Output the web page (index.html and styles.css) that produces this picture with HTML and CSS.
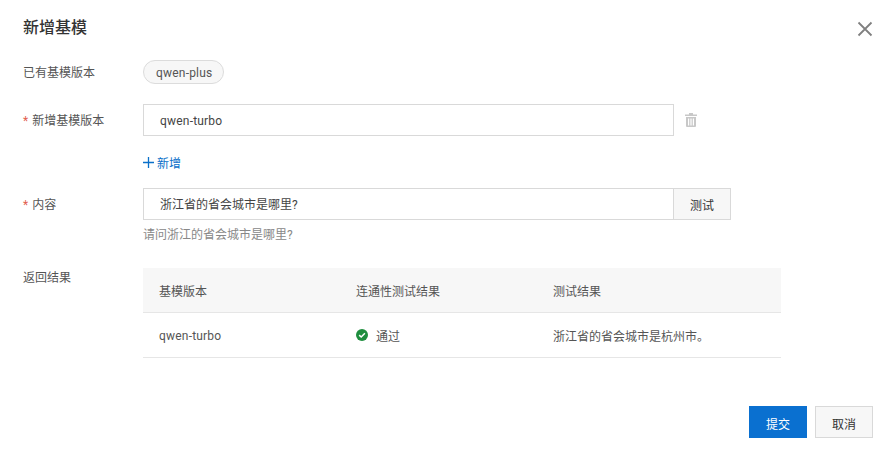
FILE: index.html
```html
<!DOCTYPE html>
<html lang="zh-CN">
<head>
    <meta charset="UTF-8">
    <title>新增基模</title>
    <link rel="stylesheet" href="styles.css">
</head>
<body>
    <div class="dialog">
        <div class="dialog-header">
            <h1 class="dialog-title">新增基模</h1>
            <svg class="close-icon" width="16" height="16" viewBox="0 0 16 16">
                <path d="M1.5 1.5 14.5 14.5M14.5 1.5 1.5 14.5" stroke="#808080" stroke-width="1.8" fill="none"/>
            </svg>
        </div>

        <div class="form">
            <div class="form-row row-existing">
                <div class="form-label">已有基模版本</div>
                <div class="form-field">
                    <span class="tag latin">qwen-plus</span>
                </div>
            </div>

            <div class="form-row row-new">
                <div class="form-label"><span class="required">*</span>新增基模版本</div>
                <div class="form-field">
                    <div class="input-line">
                        <div class="input latin">qwen-turbo</div>
                        <svg class="trash-icon" width="12" height="14" viewBox="0 0 12 14">
                            <path d="M4 0h4v1.5h4v1.5H0V1.500h4zM1 4h10v9a1 1 0 0 1-1 1H2a1 1 0 0 1-1-1zM3 5.500v7h1.200v-7zM5.400 5.500v7h1.200v-7zM7.800 5.500v7H9v-7z" fill="#c8c8c8" fill-rule="evenodd"/>
                        </svg>
                    </div>
                    <div class="add-link">
                        <svg width="11" height="11" viewBox="0 0 11 11">
                            <path d="M5.500 0v11M0 5.500h11" stroke="#0a70c9" stroke-width="1.300" fill="none"/>
                        </svg>
                        <span>新增</span>
                    </div>
                </div>
            </div>

            <div class="form-row row-content">
                <div class="form-label"><span class="required">*</span>内容</div>
                <div class="form-field">
                    <div class="input-line">
                        <div class="input">浙江省的省会城市是哪里?</div>
                        <div class="input-addon">测试</div>
                    </div>
                    <div class="hint">请问浙江的省会城市是哪里?</div>
                </div>
            </div>

            <div class="form-row">
                <div class="form-label label-result">返回结果</div>
                <div class="form-field">
                    <div class="result-table">
                        <div class="table-row table-head">
                            <div class="col-version">基模版本</div>
                            <div class="col-status">连通性测试结果</div>
                            <div>测试结果</div>
                        </div>
                        <div class="table-row table-body">
                            <div class="col-version latin">qwen-turbo</div>
                            <div class="col-status status-ok">
                                <svg width="12" height="12" viewBox="0 0 12 12">
                                    <circle cx="6" cy="6" r="6" fill="#1e8e3e"/>
                                    <path d="M3.200 6.100 5.200 8 8.900 4.200" stroke="#fff" stroke-width="1.500" fill="none"/>
                                </svg>
                                <span>通过</span>
                            </div>
                            <div>浙江省的省会城市是杭州市。</div>
                        </div>
                    </div>
                </div>
            </div>
        </div>

        <div class="dialog-footer">
            <button class="btn btn-primary">提交</button>
            <button class="btn">取消</button>
        </div>
    </div>
</body>
</html>
```

FILE: styles.css
```css
* {
    box-sizing: border-box;
}
body {
    margin: 0;
    background-color: #fff;
    color: #333;
    font-family: "Roboto", "Noto Sans CJK SC", sans-serif;
    font-size: 12px;
}
.latin {
    letter-spacing: 0.2px;
}
.dialog {
    width: 894px;
    height: 453px;
    padding: 17px 21px 15px 23px;
    display: flex;
    flex-direction: column;
}
.dialog-header {
    display: flex;
    justify-content: space-between;
    align-items: center;
    height: 23px;
}
.dialog-title {
    margin: 0 0 2px;
    font-size: 16px;
    line-height: 22px;
    font-weight: 500;
    color: #333;
}
.close-icon {
    margin-top: 1px;
}
.form {
    margin-top: 20px;
    flex: 1;
}
.form-row {
    display: flex;
}
.row-existing {
    height: 44px;
}
.row-new {
    height: 84px;
}
.row-content {
    height: 80px;
}
.form-label {
    width: 120px;
    line-height: 26px;
    color: #555;
}
.required {
    color: #e2604f;
    margin-right: 4px;
}
.row-new .form-label, .row-content .form-label {
    line-height: 34px;
}
.label-result {
    line-height: 20px;
}
.tag {
    display: inline-block;
    height: 24px;
    line-height: 24px;
    padding: 0 11px 0 12px;
    border: 1px solid #dcdcdc;
    border-radius: 12px;
    background-color: #f7f7f7;
    color: #555;
}
.input-line {
    display: flex;
    align-items: center;
}
.input {
    height: 32px;
    width: 531px;
    line-height: 32px;
    padding-left: 16px;
    border: 1px solid #d9d9d9;
    color: #444;
}
.trash-icon {
    margin-left: 11px;
}
.add-link {
    display: flex;
    align-items: center;
    gap: 3px;
    margin-top: 17px;
    height: 18px;
    color: #0a70c9;
}
.input-addon {
    width: 58px;
    height: 32px;
    line-height: 34px;
    margin-left: -1px;
    text-align: center;
    background-color: #f7f7f7;
    border: 1px solid #d9d9d9;
}
.hint {
    margin-top: 7px;
    line-height: 17px;
    color: #888;
}
.result-table {
    width: 638px;
}
.table-row {
    display: flex;
    padding-left: 16px;
    align-items: center;
    border-bottom: 1px solid #e6e6e6;
    color: #555;
}
.table-head {
    height: 45px;
    background-color: #f7f7f7;
}
.table-body {
    height: 45px;
}
.table-body .latin {
    padding-top: 2px;
}
.col-version {
    width: 197px;
}
.col-status {
    width: 197px;
}
.status-ok {
    display: flex;
    align-items: center;
    gap: 8px;
}
.dialog-footer {
    display: flex;
    justify-content: flex-end;
    gap: 8px;
}
.btn {
    width: 58px;
    height: 32px;
    padding: 3px 0 0;
    font: inherit;
    color: #333;
    background-color: #f7f7f7;
    border: 1px solid #d9d9d9;
}
.btn-primary {
    color: #fff;
    background-color: #0a70d0;
    border-color: #0a70d0;
}
```
